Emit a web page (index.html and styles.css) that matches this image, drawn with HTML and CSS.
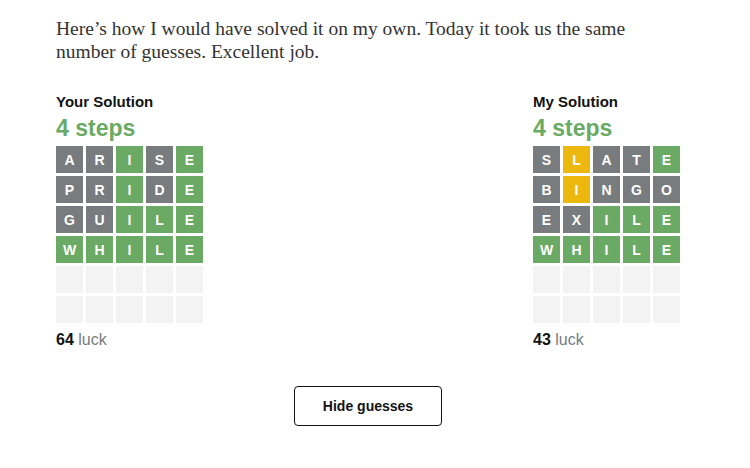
FILE: index.html
```html
<!DOCTYPE html>
<html lang="en">

<head>
    <meta charset="UTF-8">
    <meta name="viewport" content="width=device-width, initial-scale=1.0">
    <title>WordleBot</title>
    <link rel="stylesheet" href="styles.css">
</head>

<body>
    <div class="container">
        <p class="intro">Here’s how I would have solved it on my own. Today it took us the same number of guesses. Excellent job.</p>

        <div class="solutions">
            <div class="solution">
                <h3>Your Solution</h3>
                <div class="steps">4 steps</div>
                <div class="board">
                    <div class="tile absent">A</div><div class="tile absent">R</div><div class="tile correct">I</div><div class="tile absent">S</div><div class="tile correct">E</div>
                    <div class="tile absent">P</div><div class="tile absent">R</div><div class="tile correct">I</div><div class="tile absent">D</div><div class="tile correct">E</div>
                    <div class="tile absent">G</div><div class="tile absent">U</div><div class="tile correct">I</div><div class="tile correct">L</div><div class="tile correct">E</div>
                    <div class="tile correct">W</div><div class="tile correct">H</div><div class="tile correct">I</div><div class="tile correct">L</div><div class="tile correct">E</div>
                    <div class="tile"></div><div class="tile"></div><div class="tile"></div><div class="tile"></div><div class="tile"></div>
                    <div class="tile"></div><div class="tile"></div><div class="tile"></div><div class="tile"></div><div class="tile"></div>
                </div>
                <div class="luck"><b>64</b> luck</div>
            </div>

            <div class="solution">
                <h3>My Solution</h3>
                <div class="steps">4 steps</div>
                <div class="board">
                    <div class="tile absent">S</div><div class="tile present">L</div><div class="tile absent">A</div><div class="tile absent">T</div><div class="tile correct">E</div>
                    <div class="tile absent">B</div><div class="tile present">I</div><div class="tile absent">N</div><div class="tile absent">G</div><div class="tile absent">O</div>
                    <div class="tile absent">E</div><div class="tile absent">X</div><div class="tile correct">I</div><div class="tile correct">L</div><div class="tile correct">E</div>
                    <div class="tile correct">W</div><div class="tile correct">H</div><div class="tile correct">I</div><div class="tile correct">L</div><div class="tile correct">E</div>
                    <div class="tile"></div><div class="tile"></div><div class="tile"></div><div class="tile"></div><div class="tile"></div>
                    <div class="tile"></div><div class="tile"></div><div class="tile"></div><div class="tile"></div><div class="tile"></div>
                </div>
                <div class="luck"><b>43</b> luck</div>
            </div>
        </div>

        <div class="actions">
            <button class="button">Hide guesses</button>
        </div>
    </div>
</body>

</html>
```

FILE: styles.css
```css
body {
    font-family: "Liberation Sans", Arial, sans-serif;
    background-color: #fff;
    color: #121212;
    margin: 0;
    padding: 0;
}

.container {
    width: 624px;
    margin-left: 56px;
}

.intro {
    font-family: "Liberation Serif", "Times New Roman", serif;
    font-size: 19.5px;
    line-height: 23px;
    color: #333;
    max-width: 600px;
    margin: 17px 0 0;
}

.solutions {
    display: flex;
    justify-content: space-between;
    margin-top: 29px;
}

h3 {
    font-size: 15px;
    margin: 0;
    line-height: 20px;
}

.steps {
    font-size: 23px;
    font-weight: bold;
    color: #6aaa64;
    line-height: 26px;
    margin-top: 3px;
}

.board {
    display: grid;
    grid-template-columns: repeat(5, 27px);
    grid-auto-rows: 27px;
    gap: 3px;
    margin-top: 5px;
}

.tile {
    background-color: #f3f3f3;
    color: #fff;
    font-size: 14px;
    font-weight: bold;
    display: flex;
    align-items: center;
    justify-content: center;
}

.absent {
    background-color: #787c7e;
}

.correct {
    background-color: #6aaa64;
}

.present {
    background-color: #edb80e;
}

.luck {
    font-size: 16px;
    line-height: 18px;
    color: #787c7e;
    margin-top: 8px;
}

.luck b {
    color: #121212;
}

.actions {
    display: flex;
    justify-content: center;
    margin-top: 37px;
}

.button {
    width: 148px;
    height: 40px;
    background-color: #fff;
    border: 1px solid #121212;
    border-radius: 4px;
    font-family: "Liberation Sans", Arial, sans-serif;
    font-size: 14px;
    font-weight: bold;
    color: #121212;
    cursor: pointer;
}
```
